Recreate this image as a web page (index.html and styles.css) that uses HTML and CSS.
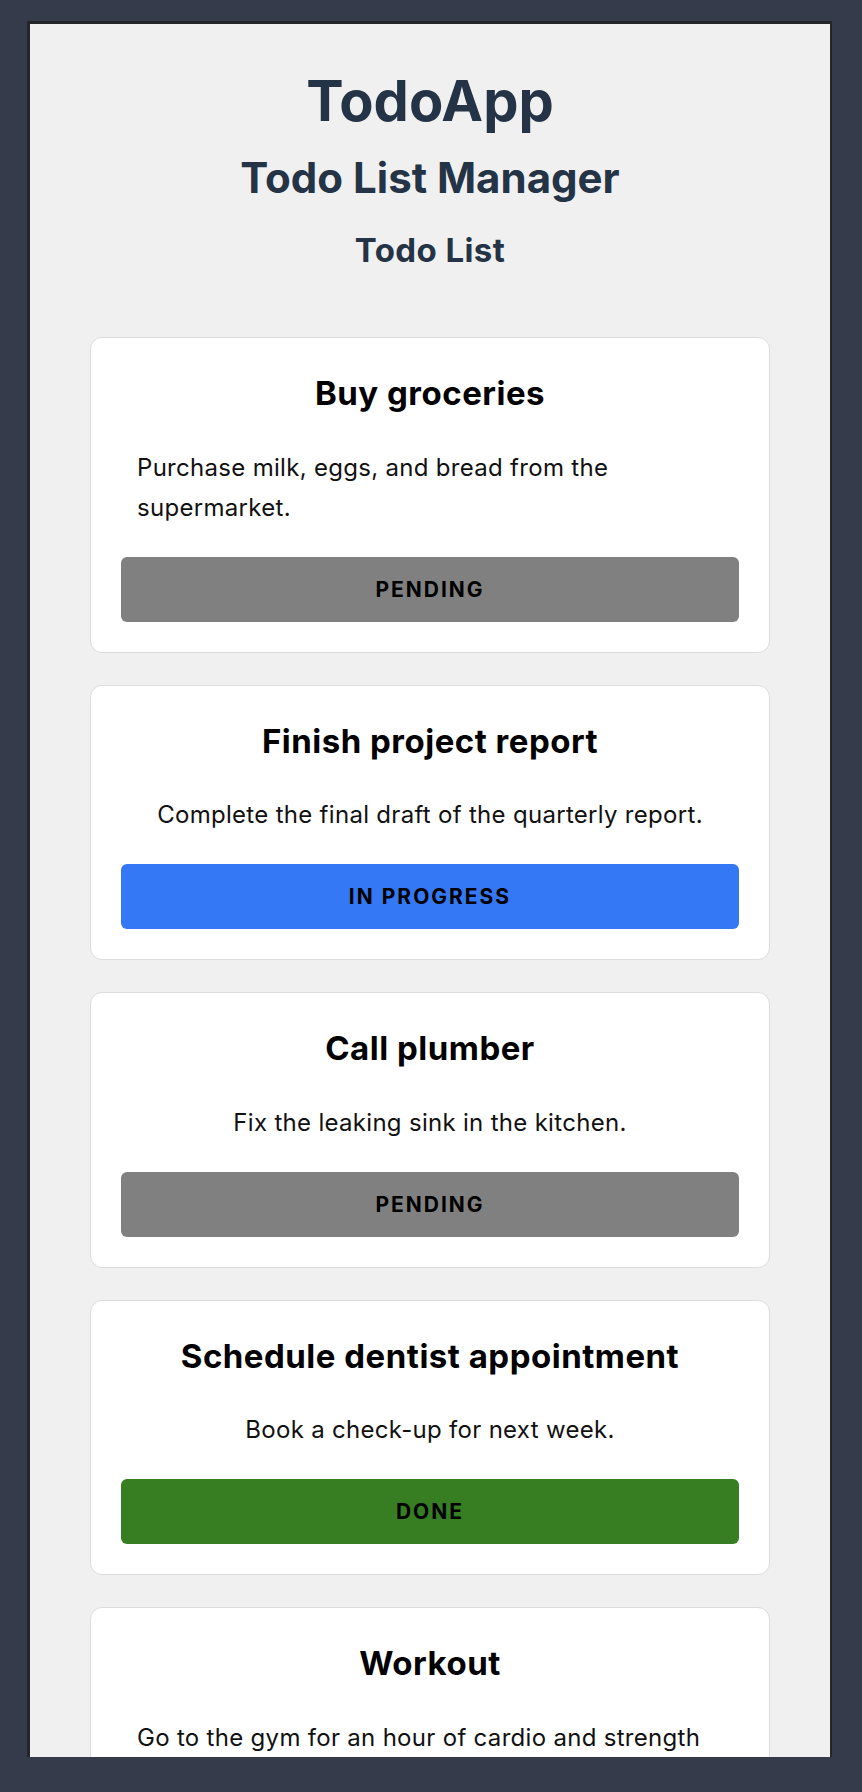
FILE: index.html
```html
<!DOCTYPE html>
<html lang="en">
<head>
<meta charset="utf-8">
<title>TodoApp</title>
<link rel="stylesheet" href="styles.css">
</head>
<body>
<div class="frame">
  <header class="header">
    <h1 class="app-title">TodoApp</h1>
    <h2 class="app-subtitle">Todo List Manager</h2>
    <h3 class="list-title">Todo List</h3>
  </header>
  <main class="todo-list">
    <section class="card">
      <h3 class="card-title">Buy groceries</h3>
      <p class="card-desc">Purchase milk, eggs, and bread from the supermarket.</p>
      <button class="status status-pending">PENDING</button>
    </section>
    <section class="card">
      <h3 class="card-title">Finish project report</h3>
      <p class="card-desc">Complete the final draft of the quarterly report.</p>
      <button class="status status-progress">IN PROGRESS</button>
    </section>
    <section class="card">
      <h3 class="card-title">Call plumber</h3>
      <p class="card-desc">Fix the leaking sink in the kitchen.</p>
      <button class="status status-pending">PENDING</button>
    </section>
    <section class="card">
      <h3 class="card-title">Schedule dentist appointment</h3>
      <p class="card-desc">Book a check-up for next week.</p>
      <button class="status status-done">DONE</button>
    </section>
    <section class="card">
      <h3 class="card-title">Workout</h3>
      <p class="card-desc">Go to the gym for an hour of cardio and strength training.</p>
      <button class="status status-pending">PENDING</button>
    </section>
  </main>
</div>
</body>
</html>
```

FILE: styles.css
```css
* {
  box-sizing: border-box;
}

html, body {
  margin: 0;
  padding: 0;
}

body {
  background: #353b4b;
  font-family: Inter, "Noto Sans", "Liberation Sans", sans-serif;
}

.frame {
  width: 805px;
  height: 1736px;
  margin: 21px 0 0 27px;
  border: 3px solid #232528;
  border-right-width: 2px;
  border-bottom: 0;
  background: #f0f0f0;
  overflow: hidden;
  padding-top: 42px;
}

.header {
  text-align: center;
  color: #243446;
}

.app-title {
  margin: 0;
  font-size: 56px;
  line-height: 70px;
  font-weight: 700;
}

.app-subtitle {
  margin: 17px 0 0;
  font-size: 42px;
  line-height: 1.2;
  font-weight: 700;
}

.list-title {
  margin: 28px 0 0;
  font-size: 33px;
  line-height: 1.2;
  font-weight: 700;
  letter-spacing: 0.4px;
}

.todo-list {
  width: 680px;
  margin: 66px auto 0;
  display: flex;
  flex-direction: column;
  gap: 32px;
}

.card {
  background: #ffffff;
  border: 1px solid #dcdcdc;
  border-radius: 12px;
  padding: 30px;
  display: flex;
  flex-direction: column;
  align-items: center;
}

.card-title {
  margin: 6px 0 34px;
  font-size: 33px;
  line-height: 1.2;
  font-weight: 700;
  letter-spacing: 0.5px;
  color: #000;
  text-align: center;
}

.card-desc {
  margin: 0 16px 29px;
  font-size: 24px;
  line-height: 40px;
  letter-spacing: 0.3px;
  color: #111;
  text-align: left;
}

.status {
  align-self: stretch;
  border: 0;
  border-radius: 6px;
  padding: 20px 0;
  font-family: inherit;
  font-size: 21px;
  line-height: 25px;
  font-weight: 700;
  letter-spacing: 2px;
  color: #000;
  cursor: pointer;
}

.status-pending {
  background: #808080;
}

.status-progress {
  background: #3478f6;
}

.status-done {
  background: #377e22;
}
```
